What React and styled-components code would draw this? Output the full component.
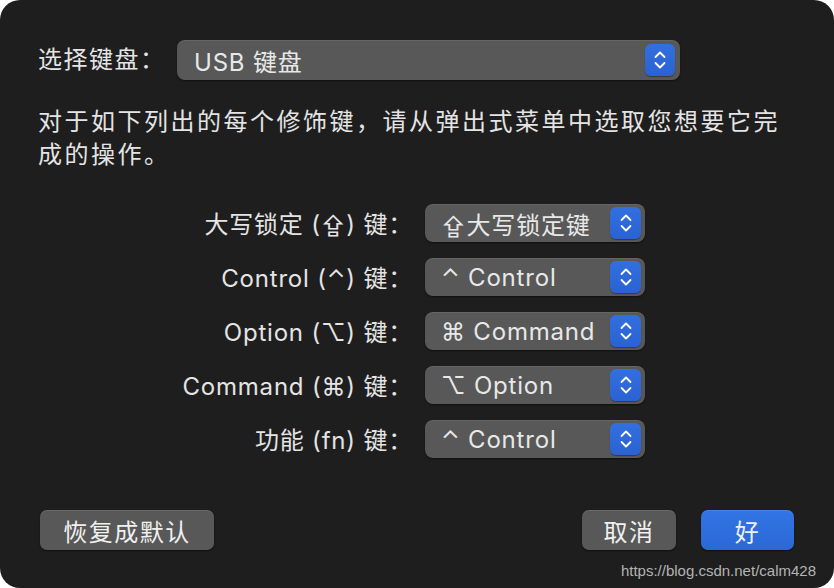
import React from "react";
import styled, { createGlobalStyle } from "styled-components";

const GlobalStyle = createGlobalStyle`
  html, body {
    margin: 0;
    padding: 0;
    background: #ffffff;
  }
  body {
    font-family: Inter, "Noto Sans CJK SC", "DejaVu Sans", sans-serif;
  }
`;

const Window = styled.div`
  position: relative;
  box-sizing: border-box;
  width: 834px;
  height: 588px;
  background: #1e1e1e;
  border-radius: 20px;
  padding: 40px 38px 38px 38px;
  display: flex;
  flex-direction: column;
  color: #e4e4e4;
  font-size: 24px;
  letter-spacing: 0.8px;
`;

const TopRow = styled.div`
  display: flex;
  align-items: center;
`;

const Label = styled.span`
  width: 139px;
  white-space: nowrap;
  line-height: 40px;
  letter-spacing: 1.5px;
`;

const Popup = styled.div`
  box-sizing: border-box;
  display: flex;
  align-items: center;
  justify-content: space-between;
  width: ${(p) => p.$width}px;
  height: ${(p) => p.$height}px;
  padding: 0 ${(p) => p.$inset}px 0 ${(p) => p.$pad}px;
  background: #575857;
  border-radius: 8px;
  box-shadow: inset 0 1px 0 rgba(255, 255, 255, 0.08), 0 1px 2px rgba(0, 0, 0, 0.5);
  color: #e8e8e8;
  white-space: nowrap;
`;

const Stepper = styled.div`
  display: flex;
  align-items: center;
  justify-content: center;
  width: ${(p) => p.$w}px;
  height: 32px;
  border-radius: 6px;
  background: linear-gradient(#336fe0, #2a62d2);
  box-shadow: 0 1px 1px rgba(0, 0, 0, 0.35);
`;

const Paragraph = styled.p`
  margin: 25px 0 0 0;
  line-height: 33px;
  width: 750px;
  letter-spacing: 2.5px;
`;

const Grid = styled.div`
  display: grid;
  grid-template-columns: 375px 220px;
  column-gap: 12px;
  row-gap: 16px;
  margin-top: 33px;
  align-items: center;
`;

const RowLabel = styled.span`
  text-align: right;
  white-space: nowrap;
  line-height: 32px;
  padding-top: 4px;
`;

const Footer = styled.div`
  margin-top: auto;
  display: flex;
  align-items: center;
  gap: 25px;
  padding: 0 2px;
`;

const Spacer = styled.div`
  flex: 1;
`;

const Button = styled.button`
  box-sizing: border-box;
  height: 40px;
  width: ${(p) => p.$width}px;
  border: none;
  border-radius: 7px;
  font-family: inherit;
  font-size: 24px;
  letter-spacing: 1.5px;
  color: #f0f0f0;
  background: ${(p) =>
    p.$primary ? "linear-gradient(#3275e4, #2b68d6)" : "#575857"};
  box-shadow: inset 0 1px 0 rgba(255, 255, 255, 0.1), 0 1px 2px rgba(0, 0, 0, 0.5);
  padding: 0;
`;

const Watermark = styled.span`
  position: absolute;
  right: 18px;
  bottom: 9px;
  font-family: "Liberation Sans", Arial, sans-serif;
  font-size: 15px;
  letter-spacing: 0;
  color: #b4b4b4;
`;

const Chevrons = () => (
  <svg width="14" height="22" viewBox="0 0 14 22" fill="none">
    <path
      d="M2.5 8 L7 3.5 L11.5 8"
      stroke="#ffffff"
      strokeWidth="1.8"
      strokeLinecap="round"
      strokeLinejoin="round"
    />
    <path
      d="M2.5 14 L7 18.5 L11.5 14"
      stroke="#ffffff"
      strokeWidth="1.8"
      strokeLinecap="round"
      strokeLinejoin="round"
    />
  </svg>
);

const rows = [
  { label: "大写锁定 (⇪) 键：", value: "⇪大写锁定键" },
  { label: "Control (⌃) 键：", value: "⌃ Control" },
  { label: "Option (⌥) 键：", value: "⌘ Command" },
  { label: "Command (⌘) 键：", value: "⌥ Option" },
  { label: "功能 (fn) 键：", value: "⌃ Control" },
];

export default function App() {
  return (
    <>
      <GlobalStyle />
      <Window>
        <TopRow>
          <Label>选择键盘：</Label>
          <Popup $width={503} $height={40} $pad={17} $inset={5}>
            <span>USB 键盘</span>
            <Stepper $w={30}>
              <Chevrons />
            </Stepper>
          </Popup>
        </TopRow>

        <Paragraph>
          对于如下列出的每个修饰键，请从弹出式菜单中选取您想要它完成的操作。
        </Paragraph>

        <Grid>
          {rows.map((r, i) => (
            <React.Fragment key={i}>
              <RowLabel>{r.label}</RowLabel>
              <Popup $width={220} $height={38} $pad={16} $inset={4}>
                <span>{r.value}</span>
                <Stepper $w={31}>
                  <Chevrons />
                </Stepper>
              </Popup>
            </React.Fragment>
          ))}
        </Grid>

        <Footer>
          <Button $width={174}>恢复成默认</Button>
          <Spacer />
          <Button $width={94}>取消</Button>
          <Button $width={93} $primary>
            好
          </Button>
        </Footer>

        <Watermark>https://blog.csdn.net/calm428</Watermark>
      </Window>
    </>
  );
}
